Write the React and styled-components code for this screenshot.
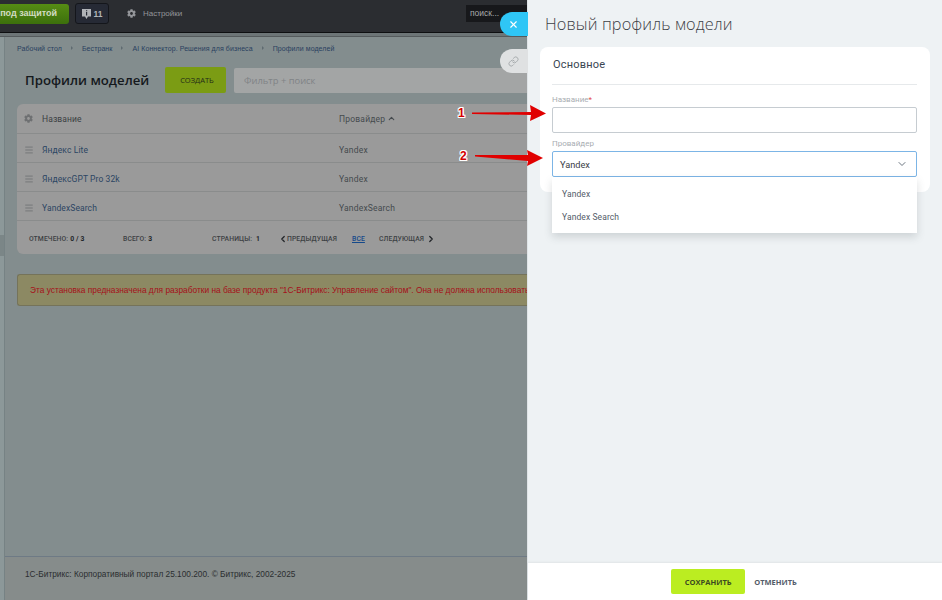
import React from "react";
import styled, { createGlobalStyle } from "styled-components";
import { X, Link, ChevronDown, ChevronUp, ChevronLeft, ChevronRight, Menu } from "lucide-react";
import { FaCog } from "react-icons/fa";

const Global = createGlobalStyle`
  html, body { margin: 0; padding: 0; background: #838d8e; }
  * { box-sizing: border-box; }
  body { font-family: "Open Sans", "Liberation Sans", sans-serif; }
`;

const Screen = styled.div`
  position: relative; width: 942px; height: 600px; overflow: hidden;
  display: flex; flex-direction: column; background: #838d8e;
`;
const TopBar = styled.header`
  height: 33px; flex: none; display: flex; align-items: center; padding-bottom: 5px;
  background: #2b2d31; border-bottom: 1px solid #0e0f11; color: #a7a9ab;
`;
const ProtectButton = styled.div`
  width: 69px; height: 20px; background: linear-gradient(#568c14, #3c700c); border-radius: 0 3px 3px 0;
  font: 700 9px/18px "Liberation Sans", sans-serif; color: #d3dcc4; text-align: right; padding-right: 12px;
  white-space: nowrap; overflow: hidden;
`;
const CounterButton = styled.div`
  margin-left: 6px; width: 34px; height: 21px; border-radius: 3px; background: #262a35; border: 1px solid #14161b;
  display: flex; align-items: center; justify-content: center; gap: 3px;
  font: 700 8.5px "Liberation Sans", sans-serif; color: #b1b4b8;
`;
const SettingsLink = styled.div`
  margin-left: 18px; display: flex; align-items: center; gap: 7px; font: 8px "Liberation Sans", sans-serif; color: #94969a;
`;
const SearchBox = styled.div`
  margin-left: auto; margin-right: 411px; width: 65px; height: 17px; background: #17181b; color: #a6a8aa;
  font: 8.5px/16px "Liberation Sans", sans-serif; padding-left: 4px;
`;
const Strip = styled.div`height: 4px; flex: none; background: #6d7577; border-bottom: 1px solid #555b5d;`;
const Body = styled.div`flex: 1; display: flex; min-height: 0;`;
const Rail = styled.div`
  width: 5px; flex: none; background: #8c9899; border-right: 1px solid #768284; display: flex; flex-direction: column;
`;
const RailMark = styled.div`height: 21px; margin-top: 198px; background: #7b8687;`;
const Main = styled.main`flex: 1; display: flex; flex-direction: column; min-width: 0;`;
const Content = styled.div`flex: 1; padding: 0 0 0 12px;`;
const Crumbs = styled.nav`
  height: 22px; display: flex; align-items: center; gap: 8px; font: 7px "Liberation Sans", sans-serif; color: #29405f;
  letter-spacing: .08px;
`;
const CrumbSep = styled.span`
  width: 0; height: 0; border-left: 2.5px solid #5f6b70; border-top: 2.5px solid transparent; border-bottom: 2.5px solid transparent;
  margin: 0 1px;
`;
const TitleRow = styled.div`height: 26px; margin-top: 8px; display: flex; align-items: center; padding-left: 8px;`;
const PageTitle = styled.h1`
  margin: 0; font: 600 13.2px "Open Sans", sans-serif; color: #15191d; width: 140px; white-space: nowrap;
`;
const CreateButton = styled.div`
  width: 61px; height: 26px; border-radius: 2px; background: #7b9c14; display: flex; align-items: center; justify-content: center;
  font: 400 7.5px "Open Sans", sans-serif; color: #232b18; padding-left: 3px;
`;
const FilterBox = styled.div`
  margin-left: 8px; flex: 1; height: 25px; background: #a3a5a5; border-radius: 2px; display: flex; align-items: center; padding-left: 10px;
  font: 9.4px "Open Sans", sans-serif; color: #808385;
`;
const TableCard = styled.section`
  margin-top: 11px; height: 150px; background: #9a9a9a; border-radius: 6px 0 0 6px; display: flex; flex-direction: column;
`;
const Row = styled.div`
  height: ${p => p.$h}px; display: flex; align-items: center; border-bottom: 1px solid #8a8c8c; padding: ${p => p.$pt}px 0 0 7px;
  font: 8.5px "Roboto", sans-serif; color: #26415f; letter-spacing: .1px;
`;
const RowIcon = styled.div`width: 18px; display: flex; color: #6e7072; flex: none;`;
const NameCell = styled.div`width: 297px; color: ${p => p.$head ? "#3b3f42" : "#2c4563"};`;
const ProviderCell = styled.div`color: #454a4e; display: flex; align-items: center; gap: 2px; letter-spacing: .2px;`;
const Pager = styled.div`
  flex: 1; display: flex; align-items: center; padding: 2px 0 0 12px; font: 500 6.8px "Roboto", sans-serif; color: #3d4144; letter-spacing: .1px;
`;
const PagerItem = styled.span`
  width: ${p => p.$w}px; flex: none; display: flex; align-items: center; white-space: nowrap;
  color: ${p => p.$link ? "#15498a" : "inherit"}; text-decoration: ${p => p.$link ? "underline" : "none"};
`;
const Strong = styled.b`color: #23262a; margin-left: 2px;`;
const PagerBack = styled(ChevronLeft)`margin-right: -1px; margin-left: -1px; flex: none; color: #23262a;`;
const PagerNext = styled(ChevronRight)`margin-left: 2px; flex: none; color: #23262a;`;
const Notice = styled.div`
  margin-top: 20px; height: 32px; background: #8c8963; border: 1px solid #75735a; border-right: 0; border-radius: 3px 0 0 3px;
  display: flex; align-items: center; padding-left: 12px; overflow: hidden; white-space: nowrap;
  font: 8.35px "Liberation Sans", sans-serif; color: #a5101a;
`;
const PageFooter = styled.footer`
  height: 44px; flex: none; border-top: 1px solid #6e7a85; background: #868c8b; padding: 12px 0 0 20px;
  font: 8.3px "Liberation Sans", sans-serif; color: #2b2e30;
`;

const Slider = styled.aside`
  position: absolute; top: 0; right: 0; bottom: 0; width: 415px; background: #eef2f4; border-left: 1px solid #dfe4e7;
  display: flex; flex-direction: column;
`;
const SideTab = styled.div`
  position: absolute; left: -28px; top: ${p => p.$top}px; width: 28px; height: 24px; border-radius: 12px 0 0 12px;
  background: ${p => p.$bg}; color: ${p => p.$fg}; display: flex; align-items: center; justify-content: center; padding-right: 1px;
`;
const SliderBody = styled.div`flex: 1; padding: 0 12px; min-height: 0;`;
const SliderTitle = styled.h2`
  margin: 0; height: 47px; padding: 12px 0 0 5px; font: 300 16.3px/24px "Open Sans", sans-serif; color: #3c4045; letter-spacing: .12px;
`;
const FormCard = styled.section`
  position: relative; height: 145px; background: #fff; border-radius: 8px; padding: 0 13px 0 12px;
`;
const CardHead = styled.div`
  height: 38px; border-bottom: 1px solid #e6e9eb; padding: 10px 0 0 1px; font: 11px/16px "Roboto", sans-serif; color: #3a4652; letter-spacing: .2px;
`;
const Field = styled.div`margin-top: ${p => p.$mt}px; position: relative;`;
const Label = styled.div`font: 8px/10px "Roboto", sans-serif; color: #a8adb2; height: 12px;`;
const Required = styled.span`color: #e4464b;`;
const TextInput = styled.div`height: 26px; border: 1px solid #c6ccd1; border-radius: 2px; background: #fff;`;
const SelectBox = styled.div`
  height: 26px; border: 1px solid #7cb5e6; border-radius: 2px; background: #fff; display: flex; align-items: center; padding: 0 8px 0 7px;
  font: 9.2px "Roboto", sans-serif; color: #3a4046; justify-content: space-between;
`;
const Dropdown = styled.div`
  position: absolute; left: 0; right: 0; top: 38px; height: 56px; background: #fff; box-shadow: 0 4px 8px rgba(60,70,80,.18);
  display: flex; flex-direction: column; padding: 5px 10px; z-index: 2;
`;
const Option = styled.div`height: 23px; display: flex; align-items: center; font: 8.5px "Roboto", sans-serif; color: #535c69; letter-spacing: .1px;`;
const SliderFooter = styled.div`
  height: 37px; flex: none; background: #fff; box-shadow: 0 -1px 2px rgba(0,0,0,.06); display: flex; align-items: center; justify-content: center; gap: 9px;
  padding-right: 2px;
`;
const SaveButton = styled.div`
  width: 74px; height: 25px; background: #bbed21; border-radius: 2px; display: flex; align-items: center; justify-content: center;
  font: 700 7.5px "Open Sans", sans-serif; color: #3b4a22;
`;
const CancelButton = styled.div`font: 700 7.5px "Open Sans", sans-serif; color: #535c69;`;

const Arrow = styled.svg`position: absolute; left: 0; top: 0; pointer-events: none; z-index: 5;`;
const Callout = styled.span`
  position: absolute; left: ${p => p.$x}px; top: ${p => p.$y}px; z-index: 6;
  font: 700 12px/12px "Liberation Sans", sans-serif; color: #d40000;
  text-shadow: 1px 0 #fff, -1px 0 #fff, 0 1px #fff, 0 -1px #fff, 1px 1px #fff, -1px -1px #fff, 1px -1px #fff, -1px 1px #fff;
`;

const NoticeIcon = () => (
  <svg width="9" height="10" viewBox="0 0 9 10">
    <path fill="#b1b4b8" d="M0 0h9v7.5H6L4.5 10 3 7.5H0z" />
    <path fill="#262a35" d="M4 1.2h1.2v1H4zM4 3h1.2v3.4H4z" />
  </svg>
);

const rows = [["Яндекс Lite", "Yandex"], ["ЯндексGPT Pro 32k", "Yandex"], ["YandexSearch", "YandexSearch"]];

export default function App() {
  return (
    <Screen>
      <Global />
      <TopBar>
        <ProtectButton>под защитой</ProtectButton>
        <CounterButton><NoticeIcon />11</CounterButton>
        <SettingsLink><FaCog size={9} />Настройки</SettingsLink>
        <SearchBox>поиск...</SearchBox>
      </TopBar>
      <Strip />
      <Body>
        <Rail><RailMark /></Rail>
        <Main>
          <Content>
            <Crumbs>
              <span>Рабочий стол</span><CrumbSep />
              <span>Бестранк</span><CrumbSep />
              <span>AI Коннектор. Решения для бизнеса</span><CrumbSep />
              <span>Профили моделей</span>
            </Crumbs>
            <TitleRow>
              <PageTitle>Профили моделей</PageTitle>
              <CreateButton>СОЗДАТЬ</CreateButton>
              <FilterBox>Фильтр + поиск</FilterBox>
            </TitleRow>
            <TableCard>
              <Row $h={30} $pt={0}>
                <RowIcon><FaCog size={9} /></RowIcon>
                <NameCell $head>Название</NameCell>
                <ProviderCell>Провайдер <ChevronUp size={9} strokeWidth={3} /></ProviderCell>
              </Row>
              {rows.map(([name, provider]) => (
                <Row $h={29} $pt={4} key={name}>
                  <RowIcon><Menu size={10} /></RowIcon>
                  <NameCell>{name}</NameCell>
                  <ProviderCell>{provider}</ProviderCell>
                </Row>
              ))}
              <Pager>
                <PagerItem $w={94}>ОТМЕЧЕНО:<Strong>0 / 3</Strong></PagerItem>
                <PagerItem $w={89}>ВСЕГО:<Strong>3</Strong></PagerItem>
                <PagerItem $w={67}>СТРАНИЦЫ:<Strong>&nbsp;1</Strong></PagerItem>
                <PagerItem $w={73}><PagerBack size={10} strokeWidth={3} />ПРЕДЫДУЩАЯ</PagerItem>
                <PagerItem $w={27} $link>ВСЕ</PagerItem>
                <PagerItem $w={70}>СЛЕДУЮЩАЯ<PagerNext size={10} strokeWidth={3} /></PagerItem>
              </Pager>
            </TableCard>
            <Notice>Эта установка предназначена для разработки на базе продукта "1С-Битрикс: Управление сайтом". Она не должна использоваться в коммерческих целях.</Notice>
          </Content>
          <PageFooter>1С-Битрикс: Корпоративный портал 25.100.200. © Битрикс, 2002-2025</PageFooter>
        </Main>
      </Body>

      <Slider>
        <SideTab $top={12} $bg="#2fc6f6" $fg="#fff"><X size={11} strokeWidth={2.5} /></SideTab>
        <SideTab $top={49} $bg="#dfe1e2" $fg="#a4a8ab"><Link size={11} /></SideTab>
        <SliderBody>
          <SliderTitle>Новый профиль модели</SliderTitle>
          <FormCard>
            <CardHead>Основное</CardHead>
            <Field $mt={10}>
              <Label>Название<Required>*</Required></Label>
              <TextInput />
            </Field>
            <Field $mt={6}>
              <Label>Провайдер</Label>
              <SelectBox>Yandex<ChevronDown size={12} color="#6b7580" /></SelectBox>
              <Dropdown>
                <Option>Yandex</Option>
                <Option>Yandex Search</Option>
              </Dropdown>
            </Field>
          </FormCard>
        </SliderBody>
        <SliderFooter>
          <SaveButton>СОХРАНИТЬ</SaveButton>
          <CancelButton>ОТМЕНИТЬ</CancelButton>
        </SliderFooter>
      </Slider>

      <Arrow width="942" height="600" viewBox="0 0 942 600">
        <polygon fill="#e00000" points="472,112.5 531,112 530,105 546,113.5 530,121 531,115 472,114" />
        <polygon fill="#e00000" points="475,155 528,155 527,150 543,158 527,166 528,161 475,156.5" />
      </Arrow>
      <Callout $x={458} $y={107}>1</Callout>
      <Callout $x={460} $y={150}>2</Callout>
    </Screen>
  );
}
